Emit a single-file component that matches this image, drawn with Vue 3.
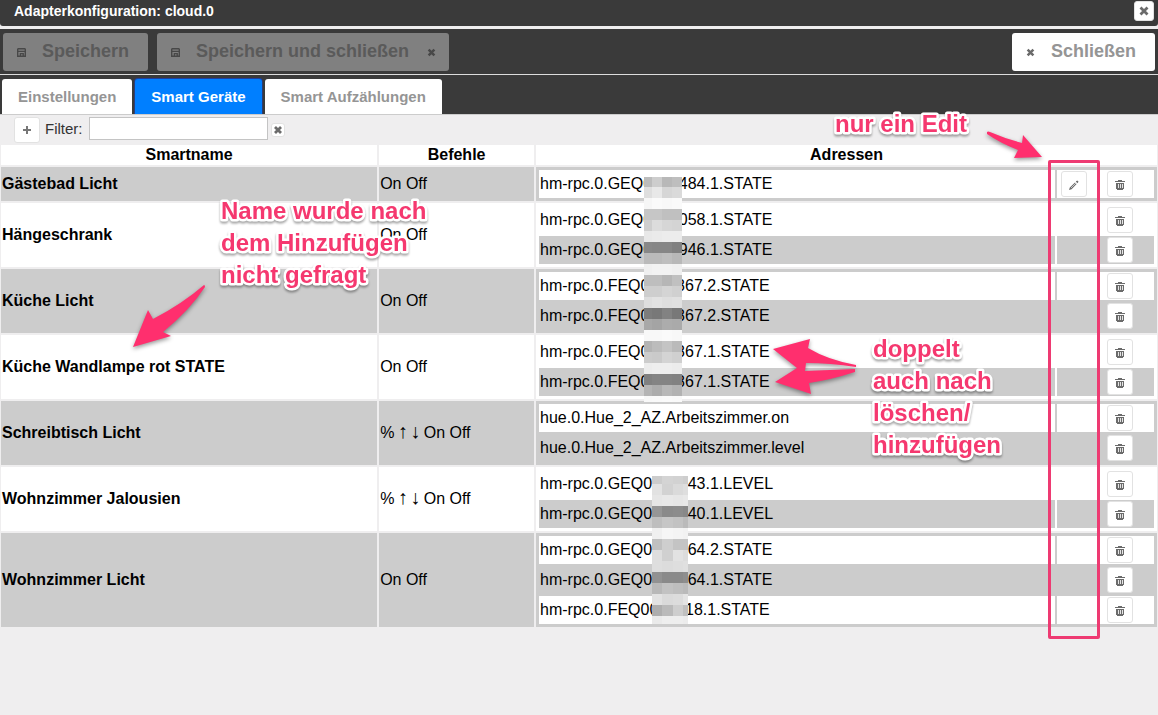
<script setup>
import { ref } from 'vue'

const filter = ref('')
const activeTab = ref(1)
const tabs = ['Einstellungen', 'Smart Geräte', 'Smart Aufzählungen']

const devices = [
  { name: 'Gästebad Licht', commands: 'On Off', editable: true, addresses: ['hm-rpc.0.GEQ0000484.1.STATE'] },
  { name: 'Hängeschrank', commands: 'On Off', addresses: ['hm-rpc.0.GEQ0000058.1.STATE', 'hm-rpc.0.GEQ0000946.1.STATE'] },
  { name: 'Küche Licht', commands: 'On Off', addresses: ['hm-rpc.0.FEQ0000867.2.STATE', 'hm-rpc.0.FEQ0000867.2.STATE'] },
  { name: 'Küche Wandlampe rot STATE', commands: 'On Off', addresses: ['hm-rpc.0.FEQ0000867.1.STATE', 'hm-rpc.0.FEQ0000867.1.STATE'] },
  { name: 'Schreibtisch Licht', dimmer: true, commands: 'On Off', addresses: ['hue.0.Hue_2_AZ.Arbeitszimmer.on', 'hue.0.Hue_2_AZ.Arbeitszimmer.level'] },
  { name: 'Wohnzimmer Jalousien', dimmer: true, commands: 'On Off', addresses: ['hm-rpc.0.GEQ0000043.1.LEVEL', 'hm-rpc.0.GEQ0000040.1.LEVEL'] },
  { name: 'Wohnzimmer Licht', commands: 'On Off', addresses: ['hm-rpc.0.GEQ0000064.2.STATE', 'hm-rpc.0.GEQ0000064.1.STATE', 'hm-rpc.0.FEQ0000018.1.STATE'] }
]

// Censor mosaics: grey level of every cell, row by row
const mosaics = [
  {
    cols: [644, 652, 662, 672, 682],
    rows: [177, 187, 198, 209, 220, 231, 242, 253, 264, 275, 286, 297, 308, 319, 330, 341, 352, 363, 374, 385, 396, 402],
    cells: [
      [188, 205, 184, 190], [222, 232, 214, 218], [246, 250, 248, 250], [198, 198, 192, 192],
      [206, 220, 214, 212], [232, 234, 236, 236], [136, 134, 134, 128], [186, 186, 190, 184],
      [240, 242, 242, 240], [190, 190, 182, 192], [206, 206, 212, 208], [222, 226, 222, 224],
      [124, 120, 130, 120], [168, 164, 172, 170], [248, 248, 250, 248], [180, 188, 196, 186],
      [204, 202, 212, 208], [236, 238, 238, 236], [128, 132, 132, 130], [180, 172, 184, 178],
      [248, 249, 250, 249]
    ]
  },
  {
    cols: [652, 662, 673, 683, 688],
    rows: [476, 484, 495, 506, 517, 528, 539, 550, 561, 572, 583, 594, 605, 616, 624],
    cells: [
      [204, 212, 210, 206], [226, 210, 218, 222], [230, 232, 230, 232], [150, 138, 140, 136],
      [190, 198, 194, 186], [240, 246, 244, 242], [192, 206, 196, 196], [222, 208, 226, 220],
      [222, 220, 222, 224], [146, 138, 138, 142], [184, 194, 190, 186], [226, 218, 220, 228],
      [174, 186, 206, 192], [234, 238, 238, 236]
    ]
  }
]
const tiles = mosaics.flatMap(m =>
  m.cells.flatMap((row, r) =>
    row.map((v, c) => ({
      x: m.cols[c], y: m.rows[r], w: m.cols[c + 1] - m.cols[c], h: m.rows[r + 1] - m.rows[r],
      fill: `rgb(${v},${v},${v})`
    }))
  )
)
</script>

<template>
  <main class="page">
    <header class="titlebar">
      <h1>Adapterkonfiguration: cloud.0</h1>
      <button class="close" type="button" aria-label="Fenster schließen">
        <svg width="10" height="10" viewBox="0 0 10 10"><path class="cross" d="M1.5 1.5 8.5 8.5M8.5 1.5 1.5 8.5" /></svg>
      </button>
    </header>

    <div class="toolbar">
      <button class="action" type="button" disabled>
        <svg width="9" height="9" viewBox="0 0 9 9"><path class="disk" d="M1.2 .7H7.8L8.3 1.2V8.3H.7V1.2ZM1 3.4H8M3.4 8V5.6H6.2V8" /></svg>
        <span>Speichern</span>
      </button>
      <button class="action both" type="button" disabled>
        <svg width="9" height="9" viewBox="0 0 9 9"><path class="disk" d="M1.2 .7H7.8L8.3 1.2V8.3H.7V1.2ZM1 3.4H8M3.4 8V5.6H6.2V8" /></svg>
        <span>Speichern und schließen</span>
        <svg width="9" height="9" viewBox="0 0 10 10"><path class="cross" d="M1.8 1.8 8.2 8.2M8.2 1.8 1.8 8.2" /></svg>
      </button>
      <button class="action last" type="button">
        <svg width="9" height="9" viewBox="0 0 10 10"><path class="cross" d="M1.8 1.8 8.2 8.2M8.2 1.8 1.8 8.2" /></svg>
        <span>Schließen</span>
      </button>
    </div>

    <nav class="tabs">
      <button
        v-for="(tab, i) in tabs" :key="tab" type="button"
        :class="['tab', { active: activeTab === i }]" @click="activeTab = i"
      >{{ tab }}</button>
    </nav>

    <div class="filter">
      <button class="add" type="button" aria-label="Hinzufügen">
        <svg width="8" height="8" viewBox="0 0 8 8"><path d="M3 0H5V3H8V5H5V8H3V5H0V3H3Z" fill="#777" /></svg>
      </button>
      <label for="filter">Filter:</label>
      <input id="filter" v-model="filter" type="text">
      <button class="clear" type="button" aria-label="Filter löschen" @click="filter = ''">
        <svg width="10" height="10" viewBox="0 0 10 10"><path class="cross" d="M2 2 8 8M8 2 2 8" /></svg>
      </button>
    </div>

    <div class="grid-wrap">
      <table class="devices">
        <colgroup><col class="c-name"><col class="c-cmd"><col></colgroup>
        <thead>
          <tr><th>Smartname</th><th>Befehle</th><th>Adressen</th></tr>
        </thead>
        <tbody>
          <tr v-for="d in devices" :key="d.name">
            <td class="name">{{ d.name }}</td>
            <td><template v-if="d.dimmer">% <span class="arrow">↑</span> <span class="arrow">↓</span></template>{{ ' ' + d.commands }}</td>
            <td>
              <table class="addresses">
                <tbody>
                  <tr v-for="(a, i) in d.addresses" :key="i">
                    <td>{{ a }}</td>
                    <td class="tools">
                      <div>
                        <button v-if="d.editable" type="button" aria-label="Bearbeiten">
                          <svg width="10" height="10" viewBox="0 0 10 10">
                            <path d="M0 10 .8 7.4 6 2.4 7.6 4 2.6 9.2ZM6.8 1.6 8.2 .4 9.6 1.8 8.4 3.2Z" fill="#6b6b6b" />
                            <path d="M2 8 7 3" stroke="#ddd" stroke-width=".8" />
                          </svg>
                        </button>
                        <button type="button" aria-label="Löschen">
                          <svg width="10" height="10" viewBox="0 0 10 10" shape-rendering="crispEdges">
                            <path d="M3 0H7V1H10V2H0V1H3ZM1 3H9V9H8V10H2V9H1Z" fill="#6b6b6b" />
                            <path d="M3 4H4V8H3ZM5 4H6V8H5ZM7 4H8V8H7Z" fill="#e4e4e4" />
                          </svg>
                        </button>
                      </div>
                    </td>
                  </tr>
                </tbody>
              </table>
            </td>
          </tr>
        </tbody>
      </table>
    </div>

    <svg class="overlay" width="1158" height="715" viewBox="0 0 1158 715">
      <g shape-rendering="crispEdges">
        <rect v-for="(t, i) in tiles" :key="i" :x="t.x" :y="t.y" :width="t.w" :height="t.h" :fill="t.fill" />
      </g>
      <g class="arrows">
        <path d="M987 132Q988 131 990 132Q1006 139 1022 143L1023 135 1042 157 1014 158 1018 150Q1000 143 987 134Z" />
        <path d="M204 285Q205 285 205 287Q190 310 163 332L171 336 133 347 148 310 153 319Q182 304 204 285Z" />
        <path d="M773 349 810 339 808 348Q828 360 856 365V367Q830 363 806 363L805 371Q830 370 855 369V372Q830 380 809 383L811 394 775 382 797 368Z" />
      </g>
      <g class="notes">
        <text x="835" y="132">nur ein Edit</text>
        <text x="221" y="219">Name wurde nach</text>
        <text x="221" y="251">dem Hinzufügen</text>
        <text x="221" y="283">nicht gefragt</text>
        <text x="873" y="357">doppelt</text>
        <text x="873" y="389">auch nach</text>
        <text x="873" y="421">löschen/</text>
        <text x="873" y="453">hinzufügen</text>
      </g>
    </svg>
    <div class="marker"></div>
  </main>
</template>

<style>
body { background: #efeeef; }
</style>

<style scoped>
.page {
  position: relative;
  min-height: 100vh;
  overflow: hidden;
  background: #efeeef;
  color: #000;
  font: 16px/20px "Liberation Sans", Arial, sans-serif;
}
button { font: inherit; cursor: pointer; margin: 0; }
svg { display: block; flex: none; }
.cross { fill: none; stroke: #6b6b6b; stroke-width: 2.8; }
.disk { fill: none; stroke: #484848; stroke-width: 1.4; }

.titlebar {
  display: flex;
  align-items: center;
  justify-content: space-between;
  box-sizing: border-box;
  height: 26px;
  padding: 0 4px 4px 14px;
  background: #3a3a3a;
  border-radius: 0 0 3px 3px;
}
.titlebar h1 { margin: 0; font-size: 14px; line-height: 20px; color: #fff; }
.close, .add, .clear, .tools button {
  display: flex;
  align-items: center;
  justify-content: center;
  box-sizing: border-box;
  padding: 0;
  background: #fff;
  border: 1px solid #e2e2e2;
  border-radius: 3px;
}
.close { width: 20px; height: 20px; }

.toolbar {
  display: flex;
  gap: 9px;
  margin-top: 3px;
  padding: 4px 3px 3px;
  background: #3a3a3a;
  border-bottom: 1px solid #ddd;
}
.action {
  display: flex;
  align-items: center;
  gap: 16px;
  height: 38px;
  padding: 0 19px 0 14px;
  background: #fff;
  color: #959595;
  border: 0;
  border-radius: 3px;
  font-size: 18px;
  font-weight: bold;
}
.action span { padding-bottom: 2px; }
.action:disabled { background: #808080; color: #5a5a5a; }
.action:disabled .cross { stroke: #484848; }
.both { padding-right: 13px; }
.both span { padding-right: 2px; }
.last { margin-left: auto; }

.tabs {
  display: flex;
  align-items: flex-end;
  gap: 3px;
  height: 39px;
  padding-left: 2px;
  background: #3a3a3a;
  border-bottom: 1px solid #ccc;
}
.tab {
  height: 35px;
  padding: 0 16px;
  background: #fff;
  color: #959595;
  border: 0;
  border-radius: 3px 3px 0 0;
  font-size: 15px;
  font-weight: bold;
}
.active {
  background: #007fff;
  color: #fff;
  box-shadow: 0 0 0 1px #1f3fa0;
  clip-path: inset(-1px -1px 0);
}

.filter {
  display: flex;
  align-items: flex-start;
  height: 26px;
  padding: 2px 0 0 14px;
  color: #333;
}
.add { width: 26px; height: 26px; }
.filter label { margin: 2px 6px 0 5px; font-size: 15px; }
.filter input {
  box-sizing: border-box;
  width: 179px;
  height: 23px;
  padding: 0 4px;
  background: #fff;
  border: 1px solid #c4c4c4;
  font: inherit;
}
.clear { width: 14px; height: 14px; margin: 6px 0 0 3px; }

.grid-wrap { margin: 0 -1px; }
table { border-collapse: separate; border-spacing: 2px; width: 100%; table-layout: fixed; }
th, td { padding: 1px; text-align: left; }
.c-name { width: 32.65%; }
.c-cmd { width: 13.45%; }
.devices th { padding: 0; background: #fff; text-align: center; line-height: 20px; }
.devices tr { background: #fff; }
.devices > tbody > tr:nth-child(odd) { background: #ccc; }
.name { font-weight: bold; }
.arrow {
  display: inline-block;
  width: 8px;
  text-indent: -1px;
  font: 20px/16px "Liberation Serif", serif;
}
.addresses tr:nth-child(even) { background: #ccc; }
.addresses td { height: 26px; }
.tools { width: 95px; }
.tools div { display: flex; justify-content: flex-end; gap: 20px; padding-right: 20px; }
.tools button { width: 26px; height: 26px; }
.tools button svg { margin-top: 2px; }

.overlay { position: absolute; top: 0; left: 0; pointer-events: none; }
.arrows { fill: #ff2f6e; filter: drop-shadow(0 2px 2px rgba(0, 0, 0, .4)); }
.notes {
  fill: #f5386f;
  stroke: #fff;
  stroke-width: 5px;
  stroke-linejoin: round;
  paint-order: stroke;
  font-size: 24px;
  font-weight: bold;
  filter: drop-shadow(0 2px 1px rgba(0, 0, 0, .35));
}
.marker {
  position: absolute;
  top: 160px;
  left: 1048px;
  box-sizing: border-box;
  width: 52px;
  height: 479px;
  border: 3px solid #ee3a72;
  border-radius: 2px;
  pointer-events: none;
}
</style>
